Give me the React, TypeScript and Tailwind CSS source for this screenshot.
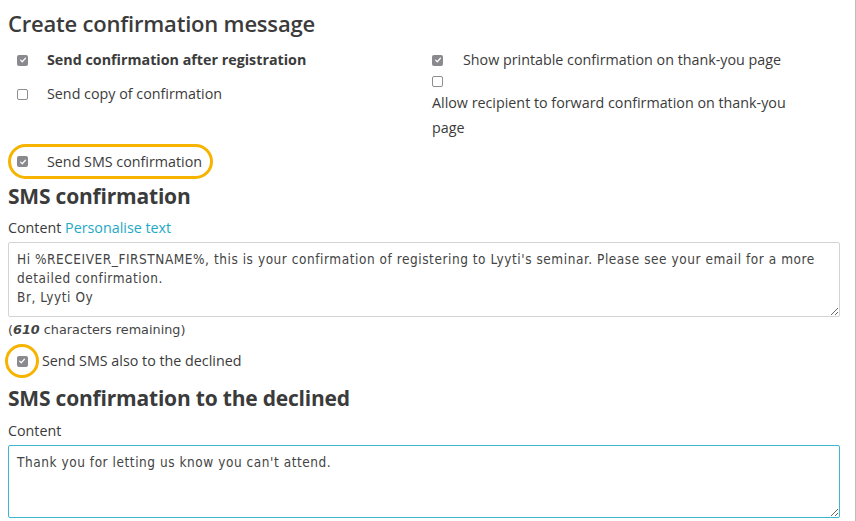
import React from 'react'

function Box({ checked }: { checked?: boolean }) {
  if (checked) {
    return (
      <span className="inline-flex h-[11px] w-[11px] shrink-0 items-center justify-center rounded-[2px] bg-[#8a8a8e]">
        <svg viewBox="0 0 10 10" className="h-[8px] w-[8px]">
          <path d="M2 5.2 L4.1 7.2 L8 2.8" fill="none" stroke="#fff" strokeWidth="1.5" strokeLinecap="round" strokeLinejoin="round" />
        </svg>
      </span>
    )
  }
  return <span className="inline-block h-[11px] w-[11px] shrink-0 rounded-[2px] border border-[#8e8e8e] bg-white" />
}

const body = { fontFamily: '"Open Sans", "Liberation Sans", sans-serif' }
const mono = { fontFamily: '"DejaVu Sans Condensed", "DejaVu Sans", sans-serif', letterSpacing: '0.55px' }

export default function App() {
  return (
    <div className="h-[521px] w-[856px] overflow-hidden border-r border-[#bdbdbd] bg-white text-[#3b3b3b]" style={body}>
      <div className="px-2">
        <h1 className="pt-[8px] text-[22px] font-semibold leading-[30px] tracking-[-0.2px]">Create confirmation message</h1>

        <div className="mt-[5px] flex text-[14.3px] leading-[20px]">
          <div className="w-[424px]">
            <div className="flex h-[34px] items-start pl-[9px] pt-[7px]">
              <div className="flex h-[20px] items-center gap-[19px]">
                <Box checked />
                <span className="font-bold">Send confirmation after registration</span>
              </div>
            </div>
            <div className="flex h-[34px] items-start pl-[9px] pt-[7px]">
              <div className="flex h-[20px] items-center gap-[19px]">
                <Box />
                <span>Send copy of confirmation</span>
              </div>
            </div>
          </div>
          <div className="flex-1">
            <div className="flex h-[27px] items-start pt-[7px]">
              <div className="flex h-[20px] items-center gap-[20px]">
                <Box checked />
                <span>Show printable confirmation on thank-you page</span>
              </div>
            </div>
            <div className="mt-[6px] flex h-[11px]">
              <Box />
            </div>
            <p className="mt-[3px] w-[370px] leading-[25px]">Allow recipient to forward confirmation on thank-you page</p>
          </div>
        </div>

        <div className="mt-[4px] flex h-[35px] w-[205px] items-center gap-[19px] rounded-full border-[3px] border-[#f6b400] pl-[6px]">
          <Box checked />
          <span className="text-[14.3px]">Send SMS confirmation</span>
        </div>

        <h2 className="mt-[0px] text-[21px] font-bold leading-[34px] tracking-[-0.2px]">SMS confirmation</h2>
        <div className="mt-[5px] text-[14.3px] leading-[20px]">
          Content <span className="text-[#1ea9c6]">Personalise text</span>
        </div>
        <textarea
          className="mt-[4px] block h-[75px] w-[832px] resize-y rounded-[2px] border border-[#d4d4d4] px-[8px] pt-[7px] text-[13.5px] leading-[19px] text-[#444] outline-none"
          style={mono}
          defaultValue={"Hi %RECEIVER_FIRSTNAME%, this is your confirmation of registering to Lyyti's seminar. Please see your email for a more detailed confirmation.\nBr, Lyyti Oy"}
        />
        <div className="mt-[4px] leading-[18px] text-[#444]" style={{ fontFamily: '"DejaVu Sans", sans-serif', fontSize: '12.8px' }}>
          (<span className="font-bold italic">610</span> characters remaining)
        </div>

        <div className="mt-[5px] flex items-center">
          <span className="-ml-[3px] flex h-[34px] w-[34px] items-center justify-center rounded-full border-[3px] border-[#f6b400]">
            <Box checked />
          </span>
          <span className="ml-[3px] text-[14.3px]">Send SMS also to the declined</span>
        </div>

        <h2 className="mt-[3px] text-[21px] font-bold leading-[34px] tracking-[-0.2px]">SMS confirmation to the declined</h2>
        <div className="mt-[6px] text-[14.3px] leading-[20px]">Content</div>
        <textarea
          className="mt-[4px] block h-[73px] w-[832px] resize-y rounded-[2px] border border-[#3db6d1] px-[8px] pt-[7px] text-[13.5px] leading-[19px] text-[#444] outline-none"
          style={mono}
          defaultValue={"Thank you for letting us know you can't attend."}
        />
      </div>
    </div>
  )
}
